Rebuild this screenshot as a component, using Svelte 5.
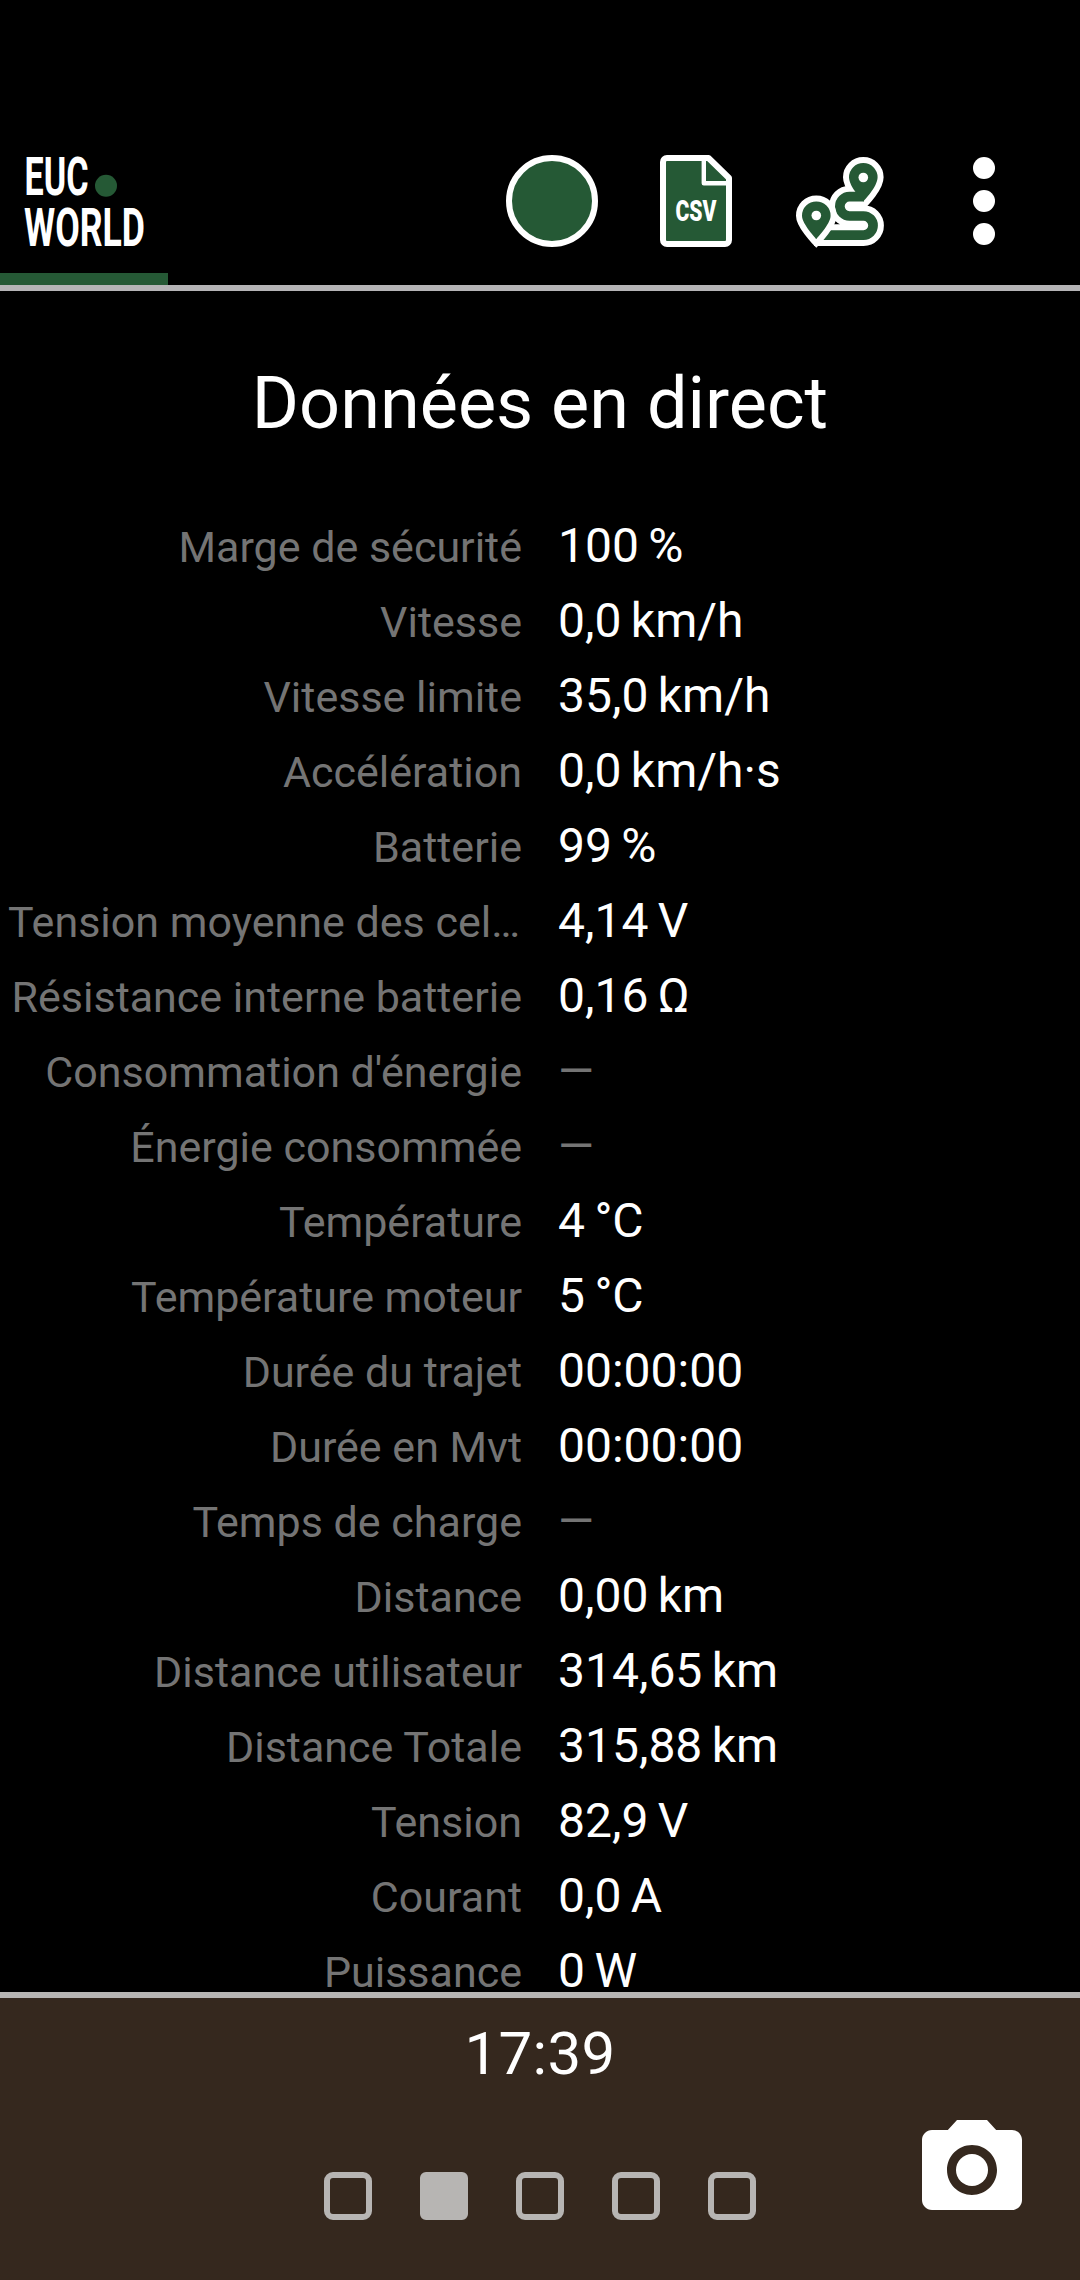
<script lang="ts">
  type Reading = { label: string; value: string };

  const readings: Reading[] = [
    { label: 'Marge de sécurité', value: '100 %' },
    { label: 'Vitesse', value: '0,0 km/h' },
    { label: 'Vitesse limite', value: '35,0 km/h' },
    { label: 'Accélération', value: '0,0 km/h·s' },
    { label: 'Batterie', value: '99 %' },
    { label: 'Tension moyenne des cellules', value: '4,14 V' },
    { label: 'Résistance interne batterie', value: '0,16 Ω' },
    { label: "Consommation d'énergie", value: '' },
    { label: 'Énergie consommée', value: '' },
    { label: 'Température', value: '4 °C' },
    { label: 'Température moteur', value: '5 °C' },
    { label: 'Durée du trajet', value: '00:00:00' },
    { label: 'Durée en Mvt', value: '00:00:00' },
    { label: 'Temps de charge', value: '' },
    { label: 'Distance', value: '0,00 km' },
    { label: 'Distance utilisateur', value: '314,65 km' },
    { label: 'Distance Totale', value: '315,88 km' },
    { label: 'Tension', value: '82,9 V' },
    { label: 'Courant', value: '0,0 A' },
    { label: 'Puissance', value: '0 W' }
  ];

  const pages = [0, 1, 2, 3, 4];
  let currentPage = $state(1);
</script>

<div class="app">
  <header>
    <div class="toolbar">
      <svg class="logo" width="132" height="100" viewBox="0 0 132 100">
        <text x="4.5" y="44" textLength="64" lengthAdjust="spacingAndGlyphs">EUC</text>
        <text x="4" y="95" textLength="121" lengthAdjust="spacingAndGlyphs">WORLD</text>
        <circle cx="86" cy="34.7" r="11" />
      </svg>

      <button class="record" aria-label="Record"></button>

      <button class="csv" aria-label="CSV">
        <svg width="80" height="100" viewBox="0 0 80 100">
          <path
            class="sheet"
            d="M11 7H52.5L73 27V89a4 4 0 0 1-4 4H11a4 4 0 0 1-4-4V11a4 4 0 0 1 4-4z"
          />
          <path class="fold" d="M47.8 7V32.3H73" />
          <text x="19.5" y="69.5" textLength="41" lengthAdjust="spacingAndGlyphs">CSV</text>
        </svg>
      </button>

      <button class="route" aria-label="Route">
        <svg width="96" height="100" viewBox="0 0 96 100">
          <path class="outline" d="M71.3 10a14.3 14.3 0 0 1 14.3 14.3C85.6 34 71.3 48.5 71.3 48.5S57 34 57 24.3A14.3 14.3 0 0 1 71.3 10z" />
          <path class="road-outline" d="M71.3 43.7H57.5a9.65 9.65 0 0 0 0 19.3H71.5a9.55 9.55 0 0 1 0 19.1H22" />
          <path class="road" d="M72 43.7H57.5a9.65 9.65 0 0 0 0 19.3H71.5a9.55 9.55 0 0 1 0 19.1H22" />
          <path class="pin" d="M71.3 10a14.3 14.3 0 0 1 14.3 14.3C85.6 34 71.3 48.5 71.3 48.5S57 34 57 24.3A14.3 14.3 0 0 1 71.3 10z" />
          <path class="outline" d="M24.3 48.4a14.3 14.3 0 0 1 14.3 14.3C38.6 71 24.3 86 24.3 86S10 71 10 62.7A14.3 14.3 0 0 1 24.3 48.4z" />
          <path class="pin" d="M24.3 48.4a14.3 14.3 0 0 1 14.3 14.3C38.6 71 24.3 86 24.3 86S10 71 10 62.7A14.3 14.3 0 0 1 24.3 48.4z" />
          <circle cx="71.3" cy="24.5" r="4.8" />
          <circle cx="24.3" cy="62.5" r="4.8" />
        </svg>
      </button>

      <button class="more" aria-label="Menu">
        <span></span>
        <span></span>
        <span></span>
      </button>
    </div>
    <div class="progress"></div>
  </header>

  <main>
    <h1>Données en direct</h1>
    {#each readings as reading}
      <div class="row">
        <span class="label">{reading.label}</span>
        {#if reading.value}
          <span class="value">{reading.value}</span>
        {:else}
          <span class="value empty">—</span>
        {/if}
      </div>
    {/each}
  </main>

  <footer>
    <div class="time">17:39</div>
    <div class="pager">
      {#each pages as page}
        <button
          class="dot"
          class:active={page === currentPage}
          aria-label="Page {page + 1}"
          onclick={() => (currentPage = page)}
        ></button>
      {/each}
    </div>
    <button class="camera" aria-label="Camera">
      <svg width="120" height="120" viewBox="0 0 24 24">
        <circle cx="12" cy="12" r="3.2" />
        <path d="M9 2 7.17 4H4c-1.1 0-2 .9-2 2v12c0 1.1.9 2 2 2h16c1.1 0 2-.9 2-2V6c0-1.1-.9-2-2-2h-3.17L15 2H9zm3 15c-2.76 0-5-2.24-5-5s2.24-5 5-5 5 2.24 5 5-2.24 5-5 5z" />
      </svg>
    </button>
  </footer>
</div>

<style>
  :global(body) {
    background: #000;
  }

  .app {
    width: 1080px;
    height: 2280px;
    display: flex;
    flex-direction: column;
    overflow: hidden;
    background: #000;
    color: #fff;
    font-family: Roboto, sans-serif;
  }

  button {
    padding: 0;
    border: none;
    background: none;
    cursor: pointer;
  }

  svg {
    display: block;
    overflow: visible;
  }

  header {
    box-sizing: border-box;
    flex: none;
    height: 291px;
    padding-top: 151px;
    display: flex;
    flex-direction: column;
    border-bottom: 6px solid #b5b4b6;
  }

  .toolbar {
    flex: 1;
    display: flex;
    align-items: flex-start;
    padding-left: 20px;
  }

  .logo {
    fill: #fff;
    font-size: 54px;
    font-weight: 700;
  }

  .logo circle {
    fill: #255935;
  }

  .record {
    box-sizing: border-box;
    width: 92px;
    height: 92px;
    margin: 4px 0 0 354px;
    border: 6px solid #fff;
    border-radius: 50%;
    background: #255935;
  }

  .csv {
    margin-left: 58px;
  }

  .sheet {
    fill: #255935;
    stroke: #fff;
    stroke-width: 6;
    stroke-linejoin: round;
  }

  .fold {
    fill: none;
    stroke: #fff;
    stroke-width: 4.4;
    stroke-linejoin: round;
  }

  .csv text {
    fill: #fff;
    font-family: Roboto, sans-serif;
    font-size: 29px;
    font-weight: 900;
  }

  .route {
    margin: 2px 0 0 56px;
  }

  .outline {
    fill: #fff;
    stroke: #fff;
    stroke-width: 12;
  }

  .road-outline {
    fill: none;
    stroke: #fff;
    stroke-width: 21.7;
  }

  .road {
    fill: none;
    stroke: #255935;
    stroke-width: 9.7;
  }

  .pin {
    fill: #255935;
  }

  .route circle {
    fill: #fff;
  }

  .more {
    display: flex;
    flex-direction: column;
    gap: 11px;
    margin: 6px 0 0 85px;
  }

  .more span {
    width: 22px;
    height: 22px;
    border-radius: 50%;
    background: #fff;
  }

  .progress {
    width: 168px;
    height: 12px;
    background: #255935;
  }

  main {
    flex: 1;
    min-height: 0;
    overflow: hidden;
    padding-top: 71px;
  }

  h1 {
    margin: 0 0 62px;
    font-size: 72px;
    font-weight: 400;
    line-height: 84px;
    text-align: center;
  }

  .row {
    display: grid;
    grid-template-columns: 522px 1fr;
    column-gap: 36px;
    align-items: baseline;
    height: 75px;
    line-height: 75px;
  }

  .label {
    overflow: hidden;
    padding-left: 8px;
    color: #747474;
    font-size: 43px;
    text-align: right;
    text-overflow: ellipsis;
    white-space: nowrap;
  }

  .value {
    font-size: 48px;
    word-spacing: -2.5px;
  }

  .empty {
    color: #747474;
    font-size: 46px;
    line-height: 77px;
  }

  footer {
    box-sizing: border-box;
    flex: none;
    position: relative;
    height: 288px;
    border-top: 6px solid #b7b5b3;
    background: #35281e;
  }

  .time {
    padding-top: 21px;
    font-size: 60px;
    line-height: 70px;
    letter-spacing: 0.3px;
    text-align: center;
  }

  .pager {
    display: flex;
    justify-content: center;
    gap: 48px;
    margin-top: 83px;
  }

  .dot {
    box-sizing: border-box;
    width: 48px;
    height: 48px;
    border: 6px solid #b7b5b3;
    border-radius: 9px;
  }

  .active {
    border-radius: 6px;
    background: #b7b5b3;
  }

  .camera {
    position: absolute;
    top: 112px;
    right: 48px;
    fill: #fff;
  }
</style>
